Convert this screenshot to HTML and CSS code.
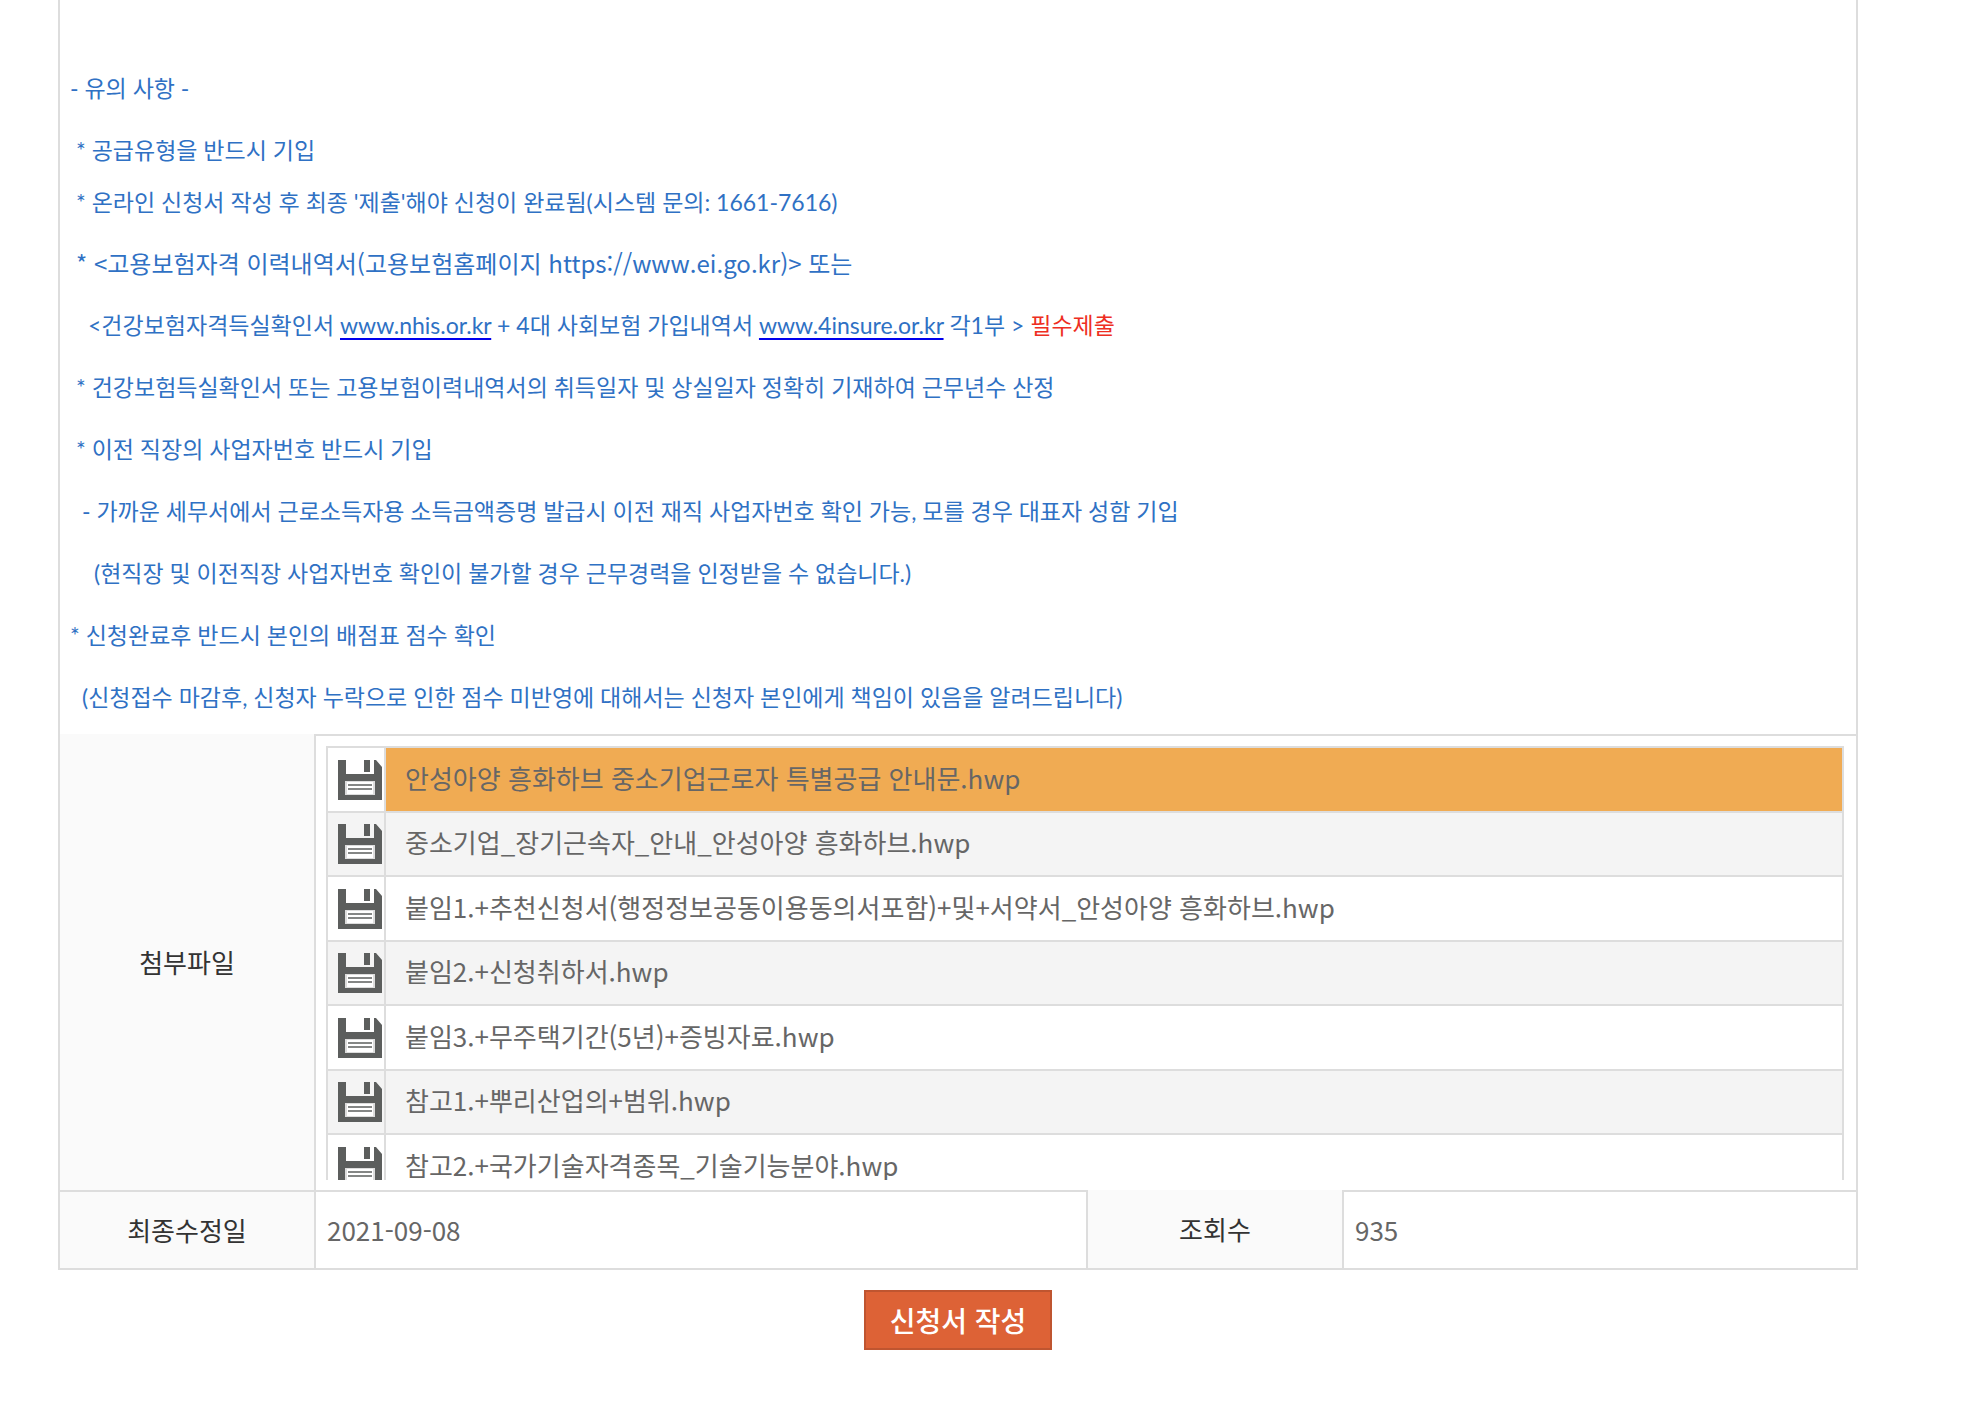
FILE: index.html
```html
<!DOCTYPE html>
<html lang="ko">
  <head>
    <meta charset="UTF-8" />
    <meta name="viewport" content="width=device-width, initial-scale=1.0" />
    <title>중소기업근로자 특별공급</title>
    <link rel="stylesheet" href="styles.css">
  </head>
  <body>
    <svg class="sprite" aria-hidden="true">
      <symbol id="icon-disk" viewBox="0 0 44 40">
        <path fill="#5c5e5d" d="M0 0h8v14h28V0h2l6 7v33H0z" />
        <path fill="#5c5e5d" d="M26 0h6v12h-6z" />
        <path fill="#ddd" d="M7 21h30v14H7z" />
        <path fill="#fff" d="M9 22h26v12H9z" />
        <path fill="#848685" d="M10 24h24v2H10zM10 28h24v2H10z" />
      </symbol>
    </svg>

    <main class="content">
      <table class="view-table">
        <colgroup>
          <col class="col-first" />
          <col />
          <col class="col-head" />
          <col class="col-count" />
        </colgroup>
        <tbody>
          <tr>
            <td class="notice" colspan="4">
              <p>- 유의 사항 -</p>
              <p class="indent-1">* 공급유형을 반드시 기입</p>
              <p class="indent-1 tight">* 온라인 신청서 작성 후 최종 '제출'해야 신청이 완료됨(시스템 문의: 1661-7616)</p>
              <p class="indent-1 large">* &lt;고용보험자격 이력내역서(고용보험홈페이지 https://www.ei.go.kr)&gt; 또는</p>
              <p class="indent-3">&lt;건강보험자격득실확인서 <a href="http://www.nhis.or.kr">www.nhis.or.kr</a> + 4대 사회보험 가입내역서 <a href="http://www.4insure.or.kr">www.4insure.or.kr</a> 각1부 &gt; <span class="required">필수제출</span></p>
              <p class="indent-1">* 건강보험득실확인서 또는 고용보험이력내역서의 취득일자 및 상실일자 정확히 기재하여 근무년수 산정</p>
              <p class="indent-1">* 이전 직장의 사업자번호 반드시 기입</p>
              <p class="indent-2">- 가까운 세무서에서 근로소득자용 소득금액증명 발급시 이전 재직 사업자번호 확인 가능, 모를 경우 대표자 성함 기입</p>
              <p class="indent-4">(현직장 및 이전직장 사업자번호 확인이 불가할 경우 근무경력을 인정받을 수 없습니다.)</p>
              <p>* 신청완료후 반드시 본인의 배점표 점수 확인</p>
              <p class="indent-2">(신청접수 마감후, 신청자 누락으로 인한 점수 미반영에 대해서는 신청자 본인에게 책임이 있음을 알려드립니다)</p>
            </td>
          </tr>
          <tr>
            <th scope="row">첨부파일</th>
            <td class="files" colspan="3">
              <div class="file-scroll">
                <table class="file-table">
                  <tbody>
                    <tr class="selected">
                      <td class="file-icon"><svg><use href="#icon-disk" /></svg></td>
                      <td class="file-name"><a href="#">안성아양 흥화하브 중소기업근로자 특별공급 안내문.hwp</a></td>
                    </tr>
                    <tr>
                      <td class="file-icon"><svg><use href="#icon-disk" /></svg></td>
                      <td class="file-name"><a href="#">중소기업_장기근속자_안내_안성아양 흥화하브.hwp</a></td>
                    </tr>
                    <tr>
                      <td class="file-icon"><svg><use href="#icon-disk" /></svg></td>
                      <td class="file-name"><a href="#">붙임1.+추천신청서(행정정보공동이용동의서포함)+및+서약서_안성아양 흥화하브.hwp</a></td>
                    </tr>
                    <tr>
                      <td class="file-icon"><svg><use href="#icon-disk" /></svg></td>
                      <td class="file-name"><a href="#">붙임2.+신청취하서.hwp</a></td>
                    </tr>
                    <tr>
                      <td class="file-icon"><svg><use href="#icon-disk" /></svg></td>
                      <td class="file-name"><a href="#">붙임3.+무주택기간(5년)+증빙자료.hwp</a></td>
                    </tr>
                    <tr>
                      <td class="file-icon"><svg><use href="#icon-disk" /></svg></td>
                      <td class="file-name"><a href="#">참고1.+뿌리산업의+범위.hwp</a></td>
                    </tr>
                    <tr>
                      <td class="file-icon"><svg><use href="#icon-disk" /></svg></td>
                      <td class="file-name"><a href="#">참고2.+국가기술자격종목_기술기능분야.hwp</a></td>
                    </tr>
                  </tbody>
                </table>
              </div>
            </td>
          </tr>
          <tr class="meta">
            <th scope="row" class="line-top">최종수정일</th>
            <td>2021-09-08</td>
            <th scope="row" class="line-left">조회수</th>
            <td>935</td>
          </tr>
        </tbody>
      </table>

      <div class="buttons">
        <button type="button" class="btn-apply">신청서 작성</button>
      </div>
    </main>
  </body>
</html>
```
FILE: styles.css
```css
* {
  box-sizing: border-box;
}

body {
  margin: 0;
  background-color: #fff;
  color: #666;
  font-family: "Noto Sans CJK KR", sans-serif;
  font-size: 26px;
  line-height: 36px;
}

.sprite {
  display: none;
}

.content {
  margin: 0 122px 0 58px;
}

table {
  width: 100%;
  border-spacing: 0;
  table-layout: fixed;
}

th,
td {
  padding: 0;
}

/* detail table */
.view-table {
  border: 2px solid #ddd;
  border-top: none;
}

.col-first {
  width: 254px;
}

.col-head {
  width: 256px;
}

.col-count {
  width: 514px;
}

.view-table th {
  background-color: #fafafa;
  color: #333;
  font-weight: 400;
}

.view-table .line-top {
  border-top: 2px solid #ddd;
}

.view-table .line-left {
  border-left: 2px solid #ddd;
}

.meta th,
.meta td {
  height: 78px;
}

.meta td {
  padding-left: 11px;
  border-top: 2px solid #ddd;
  border-left: 2px solid #ddd;
}

/* notice text */
.notice {
  padding: 70px 10px 19px;
  color: #2f71c4;
  font-family: Lato, "Noto Sans CJK KR", sans-serif;
  font-size: 23px;
}

.notice p {
  height: 36px;
  margin: 26px 0 0;
}

.notice p:first-child {
  margin-top: 0;
}

.notice .tight {
  margin-top: 16px;
}

.notice .large {
  margin-top: 25px;
  font-family: "Noto Sans CJK KR", sans-serif;
  font-size: 24px;
}

.notice .indent-1 {
  padding-left: 6px;
}

.notice .indent-2 {
  padding-left: 12px;
}

.notice .indent-3 {
  padding-left: 18px;
}

.notice .indent-4 {
  padding-left: 24px;
}

.notice a {
  color: inherit;
  text-decoration: underline 2px #0000ee;
  text-underline-offset: 4px;
  text-decoration-skip-ink: none;
}

.required {
  color: #ee2e22;
}

/* attached files */
.files {
  padding: 10px 12px 10px 10px;
  border-top: 2px solid #ddd;
  border-left: 2px solid #ddd;
}

.file-scroll {
  height: 434px;
  overflow-y: auto;
  scrollbar-width: none;
}

.file-table {
  border-right: 2px solid #ddd;
}

.file-table td {
  height: 65px;
  border-top: 2px solid #ddd;
  border-left: 2px solid #ddd;
}

.file-table tr:nth-child(even) td {
  height: 64px;
  background-color: #f4f4f4;
}

.file-table .file-icon {
  width: 58px;
  padding-left: 10px;
}

.file-icon svg {
  display: block;
  width: 44px;
  height: 40px;
}

.file-table .file-name {
  padding: 0 0 4px 19px;
}

.file-name a {
  color: inherit;
  text-decoration: none;
}

.selected .file-name {
  background-color: #f0ab53;
}

/* bottom button */
.buttons {
  display: flex;
  justify-content: center;
  padding: 20px 0 56px;
}

.btn-apply {
  height: 60px;
  padding: 0 24px;
  border: 2px solid #bf5530;
  background-color: #dd6236;
  color: #fff;
  font-family: inherit;
  font-size: 28px;
  font-weight: 500;
  cursor: pointer;
}
```
